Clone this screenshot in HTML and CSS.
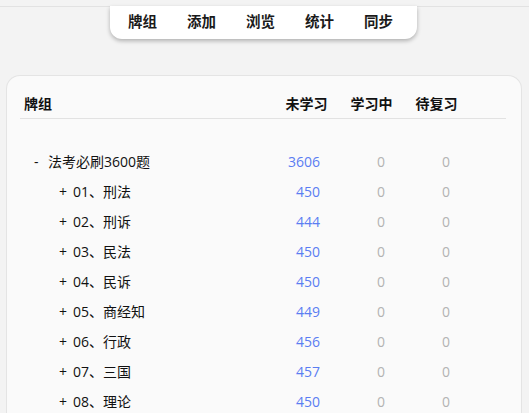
FILE: index.html
```html
<!DOCTYPE html>
<html lang="zh-CN">
<head>
    <meta charset="UTF-8">
    <title>牌组</title>
    <link rel="stylesheet" href="styles.css">
</head>
<body>
    <div class="top-strip"></div>

    <nav class="toolbar">
        <a class="tab">牌组</a>
        <a class="tab">添加</a>
        <a class="tab">浏览</a>
        <a class="tab">统计</a>
        <a class="tab">同步</a>
    </nav>

    <div class="deck-card">
        <div class="deck-table">
            <div class="head name-head">牌组</div>
            <div class="head">未学习</div>
            <div class="head">学习中</div>
            <div class="head">待复习</div>
            <div class="head"></div>

            <div class="spacer"></div>

            <div class="deck depth-0"><span class="collapse">-</span>法考必刷3600题</div>
            <div class="count new">3606</div>
            <div class="count zero">0</div>
            <div class="count zero">0</div>
            <div></div>

            <div class="deck depth-1"><span class="collapse">+</span>01、刑法</div>
            <div class="count new">450</div>
            <div class="count zero">0</div>
            <div class="count zero">0</div>
            <div></div>

            <div class="deck depth-1"><span class="collapse">+</span>02、刑诉</div>
            <div class="count new">444</div>
            <div class="count zero">0</div>
            <div class="count zero">0</div>
            <div></div>

            <div class="deck depth-1"><span class="collapse">+</span>03、民法</div>
            <div class="count new">450</div>
            <div class="count zero">0</div>
            <div class="count zero">0</div>
            <div></div>

            <div class="deck depth-1"><span class="collapse">+</span>04、民诉</div>
            <div class="count new">450</div>
            <div class="count zero">0</div>
            <div class="count zero">0</div>
            <div></div>

            <div class="deck depth-1"><span class="collapse">+</span>05、商经知</div>
            <div class="count new">449</div>
            <div class="count zero">0</div>
            <div class="count zero">0</div>
            <div></div>

            <div class="deck depth-1"><span class="collapse">+</span>06、行政</div>
            <div class="count new">456</div>
            <div class="count zero">0</div>
            <div class="count zero">0</div>
            <div></div>

            <div class="deck depth-1"><span class="collapse">+</span>07、三国</div>
            <div class="count new">457</div>
            <div class="count zero">0</div>
            <div class="count zero">0</div>
            <div></div>

            <div class="deck depth-1"><span class="collapse">+</span>08、理论</div>
            <div class="count new">450</div>
            <div class="count zero">0</div>
            <div class="count zero">0</div>
            <div></div>
        </div>
    </div>
</body>
</html>
```

FILE: styles.css
```css
* {
    margin: 0;
    padding: 0;
    box-sizing: border-box;
}

html,
body {
    height: 100%;
    overflow: hidden;
}

body {
    font-family: "Open Sans", "Noto Sans CJK SC", sans-serif;
    background: #f3f3f3;
    color: #111;
}

.top-strip {
    height: 7px;
    border-bottom: 1px solid #e2e2e2;
}

/* top toolbar */
.toolbar {
    display: flex;
    gap: 30px;
    width: 307px;
    height: 33px;
    margin: -1px auto 0 110px;
    padding: 0 22px 0 18px;
    align-items: center;
    background: #fff;
    border-radius: 0 0 12px 12px;
    box-shadow: 0 2px 4px rgba(0, 0, 0, 0.28);
}

.tab {
    font-size: 14.5px;
    font-weight: bold;
    color: #1a1a1a;
    line-height: 1;
}

/* deck list, runs off the bottom of the window */
.deck-card {
    margin: 36px 7px 0 6px;
    padding: 13px 15px 0 13px;
    height: 338px;
    overflow: hidden;
    background: #fafafa;
    border: 1px solid #e4e4e4;
    border-bottom: none;
    border-radius: 14px 14px 0 0;
}

.deck-table {
    display: grid;
    grid-template-columns: 1fr repeat(3, 65px) 37px;
    font-size: 14px;
}

.head {
    font-weight: bold;
    text-align: center;
    height: 30px;
    line-height: 30px;
    border-bottom: 1px solid #e2e2e2;
}

.name-head {
    text-align: left;
    padding-left: 4px;
}

.spacer {
    grid-column: 1 / -1;
    height: 28px;
}

.deck,
.count {
    height: 30px;
    line-height: 30px;
    white-space: nowrap;
}

.depth-0 {
    padding-left: 14px;
}

.depth-1 {
    padding-left: 39px;
}

.collapse {
    display: inline-block;
    width: 14px;
}

.count {
    text-align: right;
    padding-right: 19px;
}

.new {
    color: #5b7df2;
}

.zero {
    color: #b3b3b3;
}
```
